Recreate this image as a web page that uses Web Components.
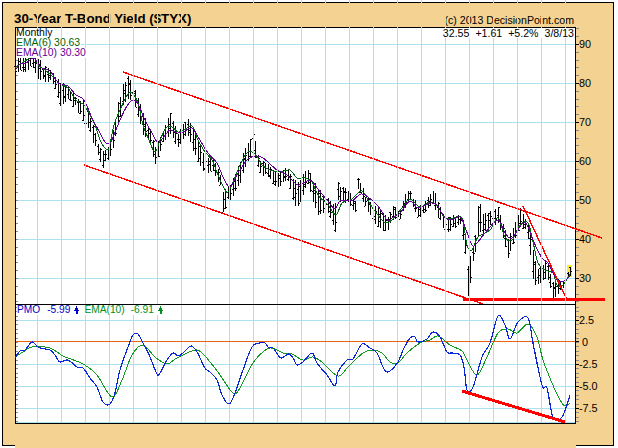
<!DOCTYPE html>
<html>
<head>
<meta charset="utf-8">
<title>30-Year T-Bond Yield</title>
<style>
  html, body { margin: 0; background: #fff; font-family: "Liberation Sans", Arial, sans-serif; }
</style>
</head>
<body>
<dp-frame>
  <dp-header>
    <span slot="title">30-Year T-Bond Yield ($TYX)</span>
    <span slot="credit">(c) 2013 DecisionPoint.com</span>
  </dp-header>
  <dp-price></dp-price>
  <dp-pmo></dp-pmo>
  <dp-xaxis></dp-xaxis>
</dp-frame>

<script>
// traced from the chart, page coordinates [x, y]
const EMA10 = [[15,71],[20,64],[26,63],[33,58],[37,62],[42,68],[50,71],[56,80],[60,84],[68,86],[76,95],[84,100],[92,118],[100,133],[105,142],[110,143],[113,137],[120,120],[127,106],[133,100],[138,104],[145,120],[152,133],[158,143],[163,138],[170,130],[177,133],[183,132],[192,128],[198,137],[208,153],[217,163],[223,177],[230,187],[238,173],[247,160],[255,156],[263,158],[277,170],[287,175],[298,185],[310,180],[317,188],[327,200],[335,209],[340,201],[353,200],[362,194],[377,205],[387,220],[392,218],[400,213],[410,201],[418,208],[430,203],[437,205],[443,215],[450,220],[460,217],[465,227],[472,245],[477,243],[485,233],[498,220],[505,233],[512,238],[523,223],[528,227],[533,240],[542,258],[548,263],[555,277],[562,282],[570,276]];
const EMA6 = [[15,68],[22,63],[33,57],[38,65],[45,70],[52,76],[60,84],[68,88],[76,100],[84,105],[90,115],[95,125],[100,140],[105,148],[109,148],[114,125],[120,110],[128,94],[132,93],[138,103],[143,125],[149,140],[155,152],[160,140],[166,128],[172,127],[178,132],[184,130],[192,126],[198,140],[205,152],[212,160],[218,175],[224,188],[228,192],[234,180],[240,165],[248,152],[256,155],[262,165],[270,170],[280,172],[290,170],[297,178],[305,178],[312,182],[318,195],[328,205],[336,215],[342,203],[352,199],[362,191],[372,207],[384,222],[392,220],[402,208],[410,199],[420,207],[430,202],[438,207],[445,218],[453,218],[462,218],[467,245],[472,250],[478,237],[490,230],[498,218],[505,237],[512,240],[520,225],[528,223],[533,242],[538,263],[545,270],[553,273],[557,285],[563,285],[570,274]];
// [x, high, low] of the monthly bars
const RANGE = [[15,57,72],[25,55,72],[33,55,68],[38,56,80],[44,65,82],[52,70,82],[60,82,106],[68,84,100],[77,97,112],[84,98,125],[90,115,133],[95,130,150],[98,143,158],[103,150,170],[105,150,165],[108,147,160],[112,133,153],[115,120,137],[117,105,125],[123,84,110],[128,75,100],[133,84,100],[138,98,118],[143,113,135],[150,128,143],[155,147,167],[163,130,143],[170,113,135],[178,133,150],[187,115,133],[195,133,157],[205,157,175],[213,158,172],[220,173,187],[223,190,213],[228,187,203],[233,178,197],[240,160,183],[245,147,167],[253,132,152],[260,160,175],[268,163,177],[277,173,190],[287,167,180],[297,183,213],[307,167,183],[317,187,215],[327,197,212],[335,203,233],[338,182,202],[343,187,203],[348,190,203],[355,200,213],[358,177,192],[367,197,210],[375,203,225],[384,213,232],[388,217,230],[393,205,220],[400,210,220],[407,188,203],[410,190,203],[418,205,218],[423,205,215],[432,186,203],[442,210,228],[445,217,235],[455,215,228],[460,215,225],[463,220,242],[466,240,260],[468,262,297],[473,247,263],[479,197,233],[483,213,233],[492,210,227],[498,207,223],[505,230,248],[508,238,258],[517,213,233],[520,206,227],[527,220,233],[531,235,263],[534,257,288],[538,267,287],[547,260,277],[552,283,298],[557,278,297],[562,283,290],[567,272,281],[570,266,277]];
const PMO = [[15,358],[20,351],[25,350],[32,342],[38,347],[45,349],[50,350],[55,355],[60,362],[68,360],[77,367],[83,368],[90,378],[97,387],[103,402],[110,404],[115,393],[120,370],[128,347],[133,335],[138,334],[143,343],[150,357],[157,374],[160,373],[167,360],[173,353],[178,356],[183,353],[191,346],[197,352],[205,368],[210,372],[217,380],[222,395],[229,404],[235,393],[243,370],[252,347],[260,343],[265,343],[268,347],[273,348],[281,358],[288,354],[293,358],[297,365],[303,362],[312,353],[317,363],[327,375],[335,386],[338,372],[347,360],[353,359],[362,344],[370,348],[377,353],[383,367],[388,372],[398,362],[403,350],[410,338],[415,337],[418,342],[427,339],[433,332],[440,337],[447,352],[452,353],[460,355],[464,367],[467,390],[473,387],[482,357],[490,343],[498,316],[505,325],[510,339],[518,322],[528,318],[533,343],[542,385],[547,388],[553,417],[562,417],[570,395]];
const PMO_EMA = [[15,357],[23,352],[32,347],[50,348],[63,356],[83,364],[97,375],[112,397],[122,380],[132,355],[143,345],[155,357],[167,364],[177,358],[197,350],[210,362],[220,375],[233,393],[240,388],[253,363],[267,349],[275,349],[283,353],[292,354],[303,360],[313,357],[323,363],[338,376],[348,367],[363,353],[373,350],[382,353],[390,362],[398,363],[407,353],[420,343],[430,340],[438,336],[450,345],[462,351],[468,362],[477,375],[487,357],[498,333],[508,329],[517,333],[528,324],[537,337],[543,360],[552,383],[560,400],[565,406],[570,403]];

// catmull-rom through the traced points
function curve(a) {
  let d = `M${a[0][0]} ${a[0][1]}`;
  for (let i = 0; i < a.length - 1; i++) {
    const p0 = a[Math.max(i - 1, 0)], p1 = a[i], p2 = a[i + 1], p3 = a[Math.min(i + 2, a.length - 1)];
    const c1 = [p1[0] + (p2[0] - p0[0]) / 6, p1[1] + (p2[1] - p0[1]) / 6];
    const c2 = [p2[0] - (p3[0] - p1[0]) / 6, p2[1] - (p3[1] - p1[1]) / 6];
    d += `C${c1[0].toFixed(1)} ${c1[1].toFixed(1)} ${c2[0].toFixed(1)} ${c2[1].toFixed(1)} ${p2[0]} ${p2[1]}`;
  }
  return d;
}

function gridX() {
  let s = '';
  for (let x = 37; x <= 565; x += 24) s += `M${x}.5 0V500`;
  return `<path d="${s}" stroke="#aee1f0" fill="none"/>`;
}

function ticks(from, to, step, major) {
  // small marks on the left edge and just outside the right edge
  let minor = '';
  for (let y = major; y > from; y -= step) minor += `M16 ${Math.round(y)}.5h2M576 ${Math.round(y)}.5h3`;
  for (let y = major; y < to; y += step) minor += `M16 ${Math.round(y)}.5h2M576 ${Math.round(y)}.5h3`;
  return `<path d="${minor}" stroke="#8a8a8a" fill="none"/>`;
}

function monthlyBars() {
  let seed = 4217, d = '', t = '';
  const rnd = () => (seed = (seed * 1103515245 + 12345) & 0x7fffffff) / 0x7fffffff;
  let k = 0;
  for (let px = 15; px <= 570; px += 2.5) {
    const x = Math.round(px);
    while (k < RANGE.length - 2 && RANGE[k + 1][0] < x) k++;
    const [x0, h0, l0] = RANGE[k], [x1, h1, l1] = RANGE[k + 1];
    const f = Math.min(1, Math.max(0, (x - x0) / (x1 - x0)));
    let hi = h0 + (h1 - h0) * f, lo = l0 + (l1 - l0) * f;
    hi = Math.round(hi + rnd() * rnd() * 5);
    lo = Math.round(lo - rnd() * rnd() * 5);
    if (lo - hi < 6) lo = hi + 6;
    d += `M${x}.5 ${hi}V${lo}`;
    const c = Math.round(hi + rnd() * (lo - hi));
    const o = Math.round(hi + rnd() * (lo - hi));
    t += `M${x + 1} ${c}.5h1M${x - 1} ${o}.5h1`;
  }
  return `<path d="${d}${t}" stroke="#000" fill="none"/>`;
}

const plotStyle = `
  svg { position: absolute; left: 0; top: 0; overflow: visible; shape-rendering: crispEdges; z-index: 1; }
`;

class DpFrame extends HTMLElement {
  connectedCallback() {
    this.attachShadow({ mode: 'open' });
    this.shadowRoot.innerHTML = `
      <style>
        :host {
          display: flex;
          flex-direction: column;
          box-sizing: border-box;
          width: 612px;
          height: 444px;
          margin: 2px;
          padding-left: 12px;
          background: #f4d292;
          border: 1px solid #000;
          color: #000;
          font-family: "Liberation Sans", Arial, sans-serif;
        }
      </style>
      <slot></slot>`;
  }
}

class DpHeader extends HTMLElement {
  connectedCallback() {
    this.attachShadow({ mode: 'open' });
    this.shadowRoot.innerHTML = `
      <style>
        :host {
          display: flex;
          justify-content: space-between;
          align-items: flex-end;
          box-sizing: border-box;
          width: 561px;
          height: 24px;
        }
        ::slotted([slot=title]) { font-size: 13.3px; font-weight: 700; line-height: 17px; margin-left: -1px; white-space: nowrap; }
        ::slotted([slot=credit]) { font-size: 10.6px; line-height: 14px; white-space: nowrap; margin-right: 2px; }
      </style>
      <slot name="title"></slot>
      <slot name="credit"></slot>`;
  }
}

class DpPrice extends HTMLElement {
  connectedCallback() {
    this.attachShadow({ mode: 'open' });
    let hgrid = '';
    for (let y = 44; y <= 278; y += 39) hgrid += `M16 ${y}.5H575`;
    const labels = [90, 80, 70, 60, 50, 40, 30].map(v => `<span>${v}</span>`).join('');
    this.shadowRoot.innerHTML = `
      <style>
        :host { display: flex; height: 277px; flex: none; }
        .plot {
          position: relative;
          flex: none;
          width: 561px;
          height: 277px;
          background: #fff;
        }
        ${plotStyle}
        .axis {
          display: grid;
          grid-auto-rows: 39px;
          align-items: center;
          align-content: start;
          margin-top: -2.5px;
          padding-left: 3px;
          font-size: 10.8px;
        }
        .legend, .quote {
          position: absolute;
          z-index: 2;
          font-size: 10.4px;
          white-space: nowrap;
        }
        .legend { left: 1px; top: 1px; display: flex; flex-direction: column; align-items: flex-start; line-height: 10px; }
        .legend span { background: #fff; padding-right: 1px; }
        .quote { right: 2px; top: 1px; display: flex; gap: 6px; padding: 1px 0 0 1px; background: #fff; font-size: 10.6px; line-height: 9px; }
      </style>
      <div class="plot">
        <svg width="561" height="277" viewBox="15 27 561 277">
          ${gridX()}
          <path d="${hgrid}" stroke="#aee1f0" fill="none"/>
          ${ticks(27, 304, 7.8, 44)}
          <path d="M15.5 27V304M575.5 27V304M15 27.5H576M576 44.5h3M576 83.5h3M576 122.5h3M576 161.5h3M576 200.5h3M576 239.5h3M576 278.5h3" stroke="#000" fill="none"/>
          <rect x="567" y="265" width="5" height="12" fill="#ffe92a"/>
          ${monthlyBars()}
          <path d="${curve(EMA6)}" fill="none" stroke="#006a10"/>
          <path d="${curve(EMA10)}" fill="none" stroke="#660099"/>
          <g fill="none" stroke="#f00">
            <path d="M123 72L602 238M84 165L483 304M523 206L566 298" stroke-width="1.4"/>
            <path d="M463 299.5H605" stroke-width="3"/>
          </g>
        </svg>
        <div class="legend">
          <span>Monthly</span>
          <span style="color:#00640a">EMA(6) 30.63</span>
          <span style="color:#660099">EMA(10) 30.30</span>
        </div>
        <div class="quote">
          <span>32.55</span><span>+1.61</span><span>+5.2%</span><span>3/8/13</span>
        </div>
      </div>
      <div class="axis">${labels}</div>`;
  }
}

class DpPmo extends HTMLElement {
  connectedCallback() {
    this.attachShadow({ mode: 'open' });
    const arrow = c => `<svg class="up" width="5" height="8" viewBox="0 0 5 8"><path d="M2.5 0L5 4.5H3.5V8H1.5V4.5H0Z" fill="${c}"/></svg>`;
    const labels = ['2.5', '0', '-2.5', '-5.0', '-7.5'].map(v => `<span class="${v === '0' ? 'zero' : ''}">${v}</span>`).join('');
    this.shadowRoot.innerHTML = `
      <style>
        :host { display: flex; height: 120px; flex: none; }
        .plot {
          position: relative;
          flex: none;
          width: 561px;
          height: 120px;
          background: #fff;
        }
        ${plotStyle}
        .axis {
          display: grid;
          grid-auto-rows: 22px;
          align-items: center;
          align-content: start;
          padding-top: 5px;
          padding-left: 3px;
          font-size: 10.8px;
        }
        .zero { padding-left: 3px; }
        .legend {
          position: absolute;
          z-index: 2;
          left: 2px;
          top: 1px;
          display: flex;
          align-items: center;
          background: #fff;
          padding-right: 2px;
          font-size: 10.2px;
          line-height: 10px;
          white-space: nowrap;
          color: #0000cc;
        }
        .legend .v { margin-left: 7px; }
        .legend .ema { color: #009020; margin-left: 5px; }
        .legend .ev { color: #009020; margin-left: 6px; }
        svg.up { position: static; margin-left: 4px; }
      </style>
      <div class="plot">
        <svg width="561" height="120" viewBox="15 304 561 120">
          ${gridX()}
          <path d="M16 320.5H575M16 364.5H575M16 386.5H575M16 408.5H575M16 422.5H575" stroke="#aee1f0" fill="none"/>
          <path d="M16 341.5H575" stroke="#e66510" fill="none"/>
          <rect x="15" y="424" width="561" height="200" fill="#f4d292"/>
          ${ticks(305, 423, 4.4, 320)}
          <path d="M15.5 304V424M575.5 304V424M15 304.5H576M15 423.5H576M576 320.5h3M576 341.5h3M576 364.5h3M576 386.5h3M576 408.5h3" stroke="#000" fill="none"/>
          <path d="${curve(PMO_EMA)}" fill="none" stroke="#109a20"/>
          <path d="${curve(PMO)}" fill="none" stroke="#0a28d8" stroke-width="1.2"/>
          <path d="M462 391L565 422" fill="none" stroke="#f00" stroke-width="3"/>
        </svg>
        <div class="legend">
          <span>PMO</span><span class="v">-5.99</span>${arrow('#0000cc')}<span class="ema">EMA(10)</span><span class="ev">-6.91</span>${arrow('#009020')}
        </div>
      </div>
      <div class="axis">${labels}</div>`;
  }
}

class DpXaxis extends HTMLElement {
  connectedCallback() {
    this.attachShadow({ mode: 'open' });
    const years = [];
    for (let y = 91; y <= 113; y++) years.push(String(y % 100).padStart(2, '0'));
    this.shadowRoot.innerHTML = `
      <style>
        :host {
          display: flex;
          flex: none;
          padding-left: 9px;
          font-size: 10.8px;
          line-height: 14px;
        }
        span { flex: none; width: 24px; text-align: center; }
      </style>
      ${years.map(y => `<span>${y}</span>`).join('')}`;
  }
}

customElements.define('dp-frame', DpFrame);
customElements.define('dp-header', DpHeader);
customElements.define('dp-price', DpPrice);
customElements.define('dp-pmo', DpPmo);
customElements.define('dp-xaxis', DpXaxis);
</script>
</body>
</html>
